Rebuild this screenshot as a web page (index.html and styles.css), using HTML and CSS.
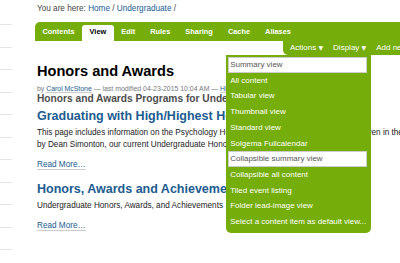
FILE: index.html
```html
<!DOCTYPE html>
<html lang="en">
<head>
    <meta charset="UTF-8">
    <title>Honors and Awards</title>
    <link rel="stylesheet" href="styles.css">
</head>
<body>
    <div class="page">
        <nav class="portlet">
            <ul>
                <li></li><li></li><li></li><li></li><li></li><li></li>
                <li></li><li></li><li></li><li></li><li></li>
            </ul>
        </nav>

        <div class="main">
            <div class="breadcrumbs">
                You are here: <a href="#">Home</a> / <a href="#">Undergraduate</a> /
            </div>

            <ul class="content-views">
                <li><a href="#">Contents</a></li>
                <li class="selected"><a href="#">View</a></li>
                <li><a href="#">Edit</a></li>
                <li><a href="#">Rules</a></li>
                <li><a href="#">Sharing</a></li>
                <li><a href="#">Cache</a></li>
                <li><a href="#">Aliases</a></li>
            </ul>

            <ul class="content-actions">
                <li><a href="#">Actions <span class="arrow">▼</span></a></li>
                <li class="open">
                    <a href="#">Display <span class="arrow">▼</span></a>
                    <ul class="menu">
                        <li class="current">Summary view</li>
                        <li>All content</li>
                        <li>Tabular view</li>
                        <li>Thumbnail view</li>
                        <li>Standard view</li>
                        <li>Solgema Fullcalendar</li>
                        <li class="current">Collapsible summary view</li>
                        <li>Collapsible all content</li>
                        <li>Tiled event listing</li>
                        <li>Folder lead-image view</li>
                        <li>Select a content item as default view...</li>
                    </ul>
                </li>
                <li><a href="#">Add new... <span class="arrow">▼</span></a></li>
            </ul>

            <h1>Honors and Awards</h1>
            <div class="byline">
                by <a href="#">Carol McStone</a> — last modified 04-23-2015 10:04 AM — <a href="#">History</a>
            </div>
            <p class="description">Honors and Awards Programs for Undergraduates</p>

            <div class="listing">
                <div class="entry">
                    <h2><a href="#">Graduating with High/Highest Honors</a></h2>
                    <p class="text">This page includes information on the Psychology Honors Program and how honours are given in the department<br>by Dean Simonton, our current Undergraduate Honors Advisor.</p>
                    <p class="more"><a href="#">Read More…</a></p>
                </div>

                <div class="entry">
                    <h2><a href="#">Honors, Awards and Achievements</a></h2>
                    <p class="text">Undergraduate Honors, Awards, and Achievements</p>
                    <p class="more"><a href="#">Read More…</a></p>
                </div>
            </div>
        </div>
    </div>
</body>
</html>
```

FILE: styles.css
```css
* {
    margin: 0;
    padding: 0;
    box-sizing: border-box;
}

html, body {
    overflow: hidden;
    background: #fff;
}

body {
    font-family: 'Liberation Sans', Arial, sans-serif;
    font-size: 8.2px;
    color: #222;
}

a {
    color: #205c90;
    text-decoration: none;
}

ul {
    list-style: none;
}

.page {
    display: flex;
}

/* left navigation, mostly scrolled out of view */
.portlet {
    width: 12px;
    flex-shrink: 0;
    padding-top: 2.5px;
}

.portlet li {
    height: 22.5px;
    border-bottom: 1px solid #e4e4e4;
}

.main {
    width: 470px;
    flex-shrink: 0;
    margin-left: 25px;
    padding-top: 3px;
}

.breadcrumbs {
    line-height: 12px;
    margin-bottom: 7px;
    color: #444;
}

/* green tabs */
.content-views {
    display: flex;
    margin-left: -2px;
    height: 19px;
    padding-top: 3px;
    background: #75ad0a;
    border-top-left-radius: 5px;
}

.content-views a {
    display: block;
    height: 16px;
    padding: 0 7.5px;
    line-height: 14px;
    font-size: 7.4px;
    font-weight: bold;
    color: #fff;
}

.content-views .selected a {
    background: #fff;
    color: #000;
    border-radius: 3px 3px 0 0;
}

.content-actions {
    display: flex;
    margin-left: 246px;
    height: 14px;
    padding-left: 2px;
    background: #75ad0a;
    border-bottom-left-radius: 5px;
}

.content-actions > li {
    position: relative;
}

.content-actions > li > a {
    display: block;
    padding: 0 5px;
    line-height: 14px;
    font-size: 8px;
    color: #fff;
    white-space: nowrap;
}

.arrow {
    font-family: 'DejaVu Sans', sans-serif;
    font-size: 6px;
}

/* display dropdown */
.menu {
    position: absolute;
    top: 100%;
    right: 0;
    width: 145px;
    padding: 2px 4px 3px 2px;
    background: #75ad0a;
    border-radius: 0 0 5px 5px;
    z-index: 10;
}

.menu li {
    padding: 0 1px;
    border: 1px solid transparent;
    line-height: 13.7px;
    font-size: 8px;
    color: #fff;
    white-space: nowrap;
}

.menu li.current {
    background: #fff;
    border-color: #ccc;
    color: #555;
}

/* page content */
h1 {
    margin-top: 7px;
    font-size: 14.6px;
    line-height: 18px;
    color: #000;
}

.byline {
    margin-top: 5px;
    font-size: 6.9px;
    line-height: 8px;
    color: #76797c;
    white-space: nowrap;
}

.byline a {
    border-bottom: 1px solid #ccc;
}

.description {
    font-size: 10.2px;
    line-height: 12px;
    font-weight: bold;
    color: #4d4d4d;
    white-space: nowrap;
}

.listing {
    display: flex;
    flex-direction: column;
    gap: 12px;
    margin-top: 4px;
}

.entry h2 {
    font-size: 12.5px;
    line-height: 15px;
    white-space: nowrap;
}

.entry .text {
    margin-top: 3px;
    line-height: 11.6px;
    white-space: nowrap;
}

.entry .more {
    margin-top: 8.5px;
    line-height: 11.6px;
}

.entry .more a {
    border-bottom: 1px solid #ccc;
}
```
